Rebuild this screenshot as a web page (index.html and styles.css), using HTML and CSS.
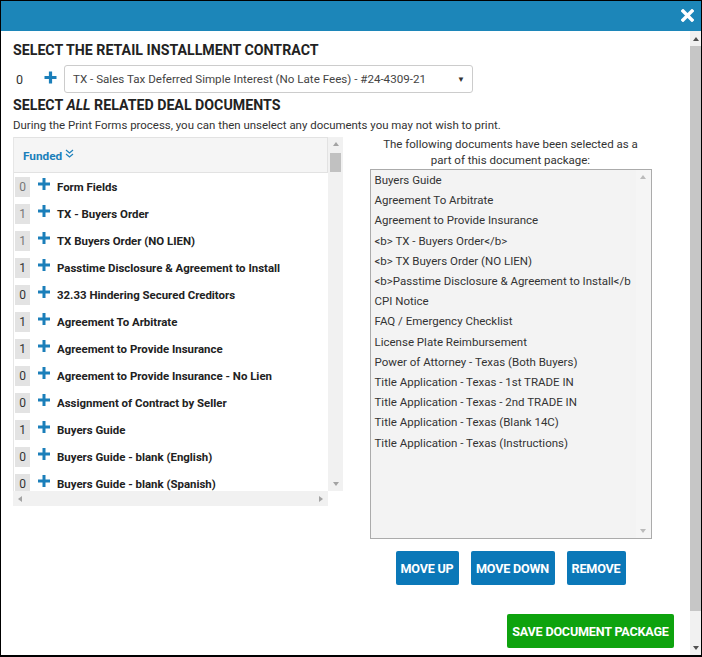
FILE: index.html
```html
<!DOCTYPE html>
<html>
<head>
<meta charset="utf-8">
<link rel="stylesheet" href="styles.css">
</head>
<body>
<div class="modal">
  <div class="modal-header">
    <svg class="close" width="13" height="13" viewBox="0 0 13 13"><path d="M2 2 L11 11 M11 2 L2 11" stroke="#fff" stroke-width="3.4" stroke-linecap="square"/></svg>
  </div>
  <div class="modal-main">
    <div class="modal-body">
      <h2 class="title t1">SELECT THE RETAIL INSTALLMENT CONTRACT</h2>
      <div class="contract-row">
        <span class="contract-count">0</span>
        <svg class="plus plus-lg" width="13" height="13" viewBox="0 0 13 13"><path d="M6.5 0.5 V12.5 M0.5 6.5 H12.5" stroke="#1b7fba" stroke-width="3.2"/></svg>
        <div class="select">
          <span class="sel-text">TX - Sales Tax Deferred Simple Interest (No Late Fees) - #24-4309-21</span>
          <span class="caret">&#9660;</span>
        </div>
      </div>
      <h2 class="title t2">SELECT <em>ALL</em> RELATED DEAL DOCUMENTS</h2>
      <p class="desc">During the Print Forms process, you can then unselect any documents you may not wish to print.</p>
      <div class="columns">
        <div class="doc-panel">
          <div class="doc-view">
            <div class="doc-head">
              <span class="funded">Funded</span>
              <svg class="chev" width="9" height="9" viewBox="0 0 9 9"><path d="M1 1 L4.5 4 L8 1 M1 5 L4.5 8 L8 5" fill="none" stroke="#1b7fba" stroke-width="1.2"/></svg>
            </div>
            <div class="doc-row"><span class="cnt light">0</span><svg class="plus" width="12" height="12" viewBox="0 0 12 12"><path d="M6 0 V12 M0 6 H12" stroke="#1b7fba" stroke-width="3"/></svg><span class="doc-name">Form Fields</span></div>
            <div class="doc-row"><span class="cnt light">1</span><svg class="plus" width="12" height="12" viewBox="0 0 12 12"><path d="M6 0 V12 M0 6 H12" stroke="#1b7fba" stroke-width="3"/></svg><span class="doc-name">TX - Buyers Order</span></div>
            <div class="doc-row"><span class="cnt light">1</span><svg class="plus" width="12" height="12" viewBox="0 0 12 12"><path d="M6 0 V12 M0 6 H12" stroke="#1b7fba" stroke-width="3"/></svg><span class="doc-name">TX Buyers Order (NO LIEN)</span></div>
            <div class="doc-row"><span class="cnt">1</span><svg class="plus" width="12" height="12" viewBox="0 0 12 12"><path d="M6 0 V12 M0 6 H12" stroke="#1b7fba" stroke-width="3"/></svg><span class="doc-name">Passtime Disclosure &amp; Agreement to Install</span></div>
            <div class="doc-row"><span class="cnt">0</span><svg class="plus" width="12" height="12" viewBox="0 0 12 12"><path d="M6 0 V12 M0 6 H12" stroke="#1b7fba" stroke-width="3"/></svg><span class="doc-name">32.33 Hindering Secured Creditors</span></div>
            <div class="doc-row"><span class="cnt">1</span><svg class="plus" width="12" height="12" viewBox="0 0 12 12"><path d="M6 0 V12 M0 6 H12" stroke="#1b7fba" stroke-width="3"/></svg><span class="doc-name">Agreement To Arbitrate</span></div>
            <div class="doc-row"><span class="cnt">1</span><svg class="plus" width="12" height="12" viewBox="0 0 12 12"><path d="M6 0 V12 M0 6 H12" stroke="#1b7fba" stroke-width="3"/></svg><span class="doc-name">Agreement to Provide Insurance</span></div>
            <div class="doc-row"><span class="cnt">0</span><svg class="plus" width="12" height="12" viewBox="0 0 12 12"><path d="M6 0 V12 M0 6 H12" stroke="#1b7fba" stroke-width="3"/></svg><span class="doc-name">Agreement to Provide Insurance - No Lien</span></div>
            <div class="doc-row"><span class="cnt">0</span><svg class="plus" width="12" height="12" viewBox="0 0 12 12"><path d="M6 0 V12 M0 6 H12" stroke="#1b7fba" stroke-width="3"/></svg><span class="doc-name">Assignment of Contract by Seller</span></div>
            <div class="doc-row"><span class="cnt">1</span><svg class="plus" width="12" height="12" viewBox="0 0 12 12"><path d="M6 0 V12 M0 6 H12" stroke="#1b7fba" stroke-width="3"/></svg><span class="doc-name">Buyers Guide</span></div>
            <div class="doc-row"><span class="cnt">0</span><svg class="plus" width="12" height="12" viewBox="0 0 12 12"><path d="M6 0 V12 M0 6 H12" stroke="#1b7fba" stroke-width="3"/></svg><span class="doc-name">Buyers Guide - blank (English)</span></div>
            <div class="doc-row"><span class="cnt">0</span><svg class="plus" width="12" height="12" viewBox="0 0 12 12"><path d="M6 0 V12 M0 6 H12" stroke="#1b7fba" stroke-width="3"/></svg><span class="doc-name">Buyers Guide - blank (Spanish)</span></div>
          </div>
          <div class="vscroll">
            <span class="arr up"></span>
            <span class="vthumb"></span>
            <span class="spacer"></span>
            <span class="arr down"></span>
          </div>
          <div class="hscroll">
            <span class="arr left"></span>
            <span class="arr right"></span>
          </div>
        </div>
        <div class="pkg">
          <p class="pkg-note">The following documents have been selected as a part of this document package:</p>
          <div class="pkg-list">
            <div class="pkg-items">
              <div>Buyers Guide</div>
              <div>Agreement To Arbitrate</div>
              <div>Agreement to Provide Insurance</div>
              <div>&lt;b&gt; TX - Buyers Order&lt;/b&gt;</div>
              <div>&lt;b&gt; TX Buyers Order (NO LIEN)</div>
              <div>&lt;b&gt;Passtime Disclosure &amp; Agreement to Install&lt;/b</div>
              <div>CPI Notice</div>
              <div>FAQ / Emergency Checklist</div>
              <div>License Plate Reimbursement</div>
              <div>Power of Attorney - Texas (Both Buyers)</div>
              <div>Title Application - Texas - 1st TRADE IN</div>
              <div>Title Application - Texas - 2nd TRADE IN</div>
              <div>Title Application - Texas (Blank 14C)</div>
              <div>Title Application - Texas (Instructions)</div>
            </div>
            <div class="pkg-scroll">
              <span class="arr up small"></span>
              <span class="arr down small"></span>
            </div>
          </div>
          <div class="btns">
            <button class="btn b-up">MOVE UP</button>
            <button class="btn b-down">MOVE DOWN</button>
            <button class="btn b-rem">REMOVE</button>
          </div>
        </div>
      </div>
      <div class="save-row">
        <button class="btn save">SAVE DOCUMENT PACKAGE</button>
      </div>
    </div>
    <div class="page-scroll">
      <span class="arr up"></span>
      <span class="pthumb"></span>
      <span class="spacer"></span>
      <span class="arr down"></span>
    </div>
  </div>
</div>
</body>
</html>
```
FILE: styles.css
```css
* { box-sizing: border-box; }
html, body { margin: 0; padding: 0; }
body {
  width: 702px;
  height: 657px;
  overflow: hidden;
  font-family: Roboto, "Liberation Sans", sans-serif;
  color: #333;
  background: #fff;
}
.modal {
  width: 702px;
  height: 657px;
  border: 1px solid #000;
  border-bottom-width: 2px;
  display: flex;
  flex-direction: column;
}
.modal-header {
  height: 30px;
  flex: none;
  background: #1c86b9;
  display: flex;
  justify-content: flex-end;
  align-items: center;
  padding-right: 7px;
}
.close { display: block; margin-top: -1px; }
.modal-main {
  flex: 1;
  display: flex;
  min-height: 0;
}
.modal-body {
  flex: 1;
  padding: 0 16px 0 12px;
  display: flex;
  flex-direction: column;
}
.title {
  margin: 0;
  font-size: 14.2px;
  line-height: 18px;
  font-weight: 700;
  color: #222;
}
.title em { font-style: italic; }
.t1 { margin-top: 10px; }
.contract-row {
  margin-top: 6px;
  display: flex;
  align-items: center;
  height: 28px;
}
.contract-count {
  width: 31px;
  padding-left: 3px;
  font-size: 12.5px;
  color: #333;
}
.plus { display: block; flex: none; }
.plus-lg { margin-right: 7px; margin-top: -4px; }
.select {
  width: 409px;
  height: 28px;
  border: 1px solid #ccc;
  border-radius: 3px;
  display: flex;
  align-items: center;
  justify-content: space-between;
  padding: 0 7px 0 8px;
  font-size: 11.6px;
  color: #444;
}
.sel-text { white-space: nowrap; }
.caret { font-size: 8px; color: #333; }
.t2 { margin-top: 3px; }
.desc {
  margin: 4px 0 0;
  font-size: 11.45px;
  line-height: 15px;
  color: #333;
}
.columns {
  margin-top: 4px;
  display: flex;
  align-items: flex-start;
}
.doc-panel {
  width: 330px;
  height: 369px;
  display: grid;
  grid-template-columns: 315px 15px;
  grid-template-rows: 354px 15px;
}
.doc-view {
  overflow: hidden;
  border-left: 1px solid #e6e6e6;
}
.doc-head {
  height: 36px;
  background: #f5f5f5;
  border: 1px solid #e2e2e2;
  border-left: none;
  display: flex;
  align-items: center;
  padding-left: 9px;
  gap: 3px;
}
.funded {
  font-size: 11.8px;
  font-weight: 700;
  color: #1b7fba;
  margin-top: 2px;
}
.chev { margin-top: -4px; }
.doc-row {
  height: 27px;
  display: flex;
  align-items: center;
  padding-left: 1px;
}
.cnt {
  width: 15px;
  height: 20px;
  background: #e3e3e3;
  font-size: 12px;
  color: #333;
  display: flex;
  align-items: center;
  justify-content: center;
  flex: none;
  margin-right: 8px;
}
.cnt.light { color: #777; }
.doc-row .plus { margin-right: 7px; margin-top: -6px; }
.doc-name {
  font-size: 11.45px;
  font-weight: 700;
  color: #222;
  white-space: nowrap;
}
.vscroll {
  background: #f1f1f1;
  display: flex;
  flex-direction: column;
  align-items: center;
}
.vscroll .spacer, .page-scroll .spacer { flex: 1; }
.vthumb {
  width: 11px;
  height: 19px;
  background: #c1c1c1;
  margin-top: 2px;
}
.hscroll {
  background: #f1f1f1;
  display: flex;
  justify-content: space-between;
  align-items: center;
  padding: 0 5px;
}
.arr { display: block; width: 0; height: 0; }
.arr.up {
  border-left: 3.5px solid transparent;
  border-right: 3.5px solid transparent;
  border-bottom: 4px solid #a3a3a3;
  margin: 5px 0;
}
.arr.down {
  border-left: 3.5px solid transparent;
  border-right: 3.5px solid transparent;
  border-top: 4px solid #a3a3a3;
  margin: 5px 0;
}
.arr.left {
  border-top: 3.5px solid transparent;
  border-bottom: 3.5px solid transparent;
  border-right: 4px solid #a3a3a3;
}
.arr.right {
  border-top: 3.5px solid transparent;
  border-bottom: 3.5px solid transparent;
  border-left: 4px solid #a3a3a3;
}
.pkg {
  width: 311px;
  margin-left: 12px;
  display: flex;
  flex-direction: column;
  align-items: center;
}
.pkg-note {
  margin: 0;
  text-align: center;
  font-size: 11.5px;
  line-height: 16px;
  color: #333;
  width: 270px;
  margin-top: -1px;
}
.pkg-list {
  width: 282px;
  height: 370px;
  margin-top: 1px;
  border: 1px solid #ababab;
  background: #f3f3f3;
  display: flex;
}
.pkg-items {
  flex: 1;
  padding: 0 0 0 4px;
  font-size: 11.5px;
  line-height: 20.2px;
  color: #333;
  white-space: nowrap;
  overflow: hidden;
}
.pkg-scroll {
  width: 15px;
  display: flex;
  flex-direction: column;
  justify-content: space-between;
  align-items: center;
  background: #f5f5f5;
}
.arr.small.up { border-bottom-color: #bbb; margin: 5px 0; }
.arr.small.down { border-top-color: #bbb; margin: 5px 0; }
.btns {
  display: flex;
  gap: 12px;
  margin-top: 12px;
}
.btn {
  font-family: Roboto, "Liberation Sans", sans-serif;
  font-size: 12.6px;
  font-weight: 700;
  color: #fff;
  background: #0b78b8;
  border: none;
  border-radius: 2px;
  height: 34px;
  padding: 0;
  letter-spacing: -0.2px;
}
.b-up { width: 63px; }
.b-down { width: 84px; }
.b-rem { width: 59px; }
.save-row {
  display: flex;
  justify-content: flex-end;
  margin-top: 29px;
}
.btn.save {
  width: 167px;
  background: #0ea30e;
}
.page-scroll {
  width: 11px;
  flex: none;
  background: #f1f1f1;
  display: flex;
  flex-direction: column;
  align-items: center;
}
.pthumb {
  width: 11px;
  height: 565px;
  background: #c6c6c6;
}
.page-scroll .arr.up { margin: 6px 0 5px; border-bottom-color: #505050; }
.page-scroll .arr.down { margin: 4px 0 5px; border-top-color: #505050; }
```
